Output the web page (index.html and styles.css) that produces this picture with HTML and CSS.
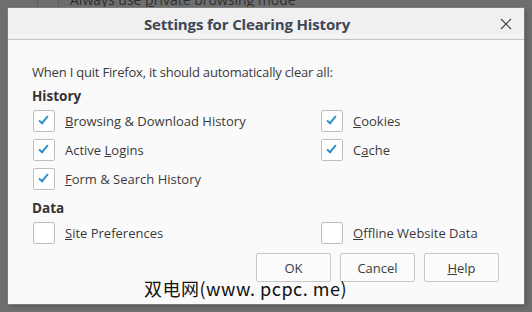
FILE: index.html
```html
<!DOCTYPE html>
<html lang="en">
<head>
  <meta charset="UTF-8">
  <title>Settings for Clearing History</title>
  <link rel="stylesheet" href="styles.css">
</head>
<body>
  <div class="backdrop">
    <div class="backdrop-row">
      <span class="backdrop-line"></span>
      <span class="backdrop-line second"></span>
      <span class="backdrop-text">Always use <u>p</u>rivate browsing mode</span>
    </div>
  </div>

  <div class="dialog">
    <div class="titlebar">
      <span class="title">Settings for Clearing History</span>
      <button class="close" aria-label="Close">
        <svg width="12" height="12" viewBox="0 0 12 12"><path d="M1 1 L11 11 M11 1 L1 11" stroke="#444" stroke-width="1.2" fill="none"/></svg>
      </button>
    </div>

    <div class="content">
      <div class="intro">When I quit Firefox, it should automatically clear all:</div>

      <div class="group-title">History</div>
      <div class="options">
        <label class="option"><span class="box checked"></span><span><u>B</u>rowsing &amp; Download History</span></label>
        <label class="option"><span class="box checked"></span><span><u>C</u>ookies</span></label>
        <label class="option"><span class="box checked"></span><span>Active <u>L</u>ogins</span></label>
        <label class="option"><span class="box checked"></span><span>C<u>a</u>che</span></label>
        <label class="option"><span class="box checked"></span><span><u>F</u>orm &amp; Search History</span></label>
      </div>

      <div class="group-title data">Data</div>
      <div class="options">
        <label class="option"><span class="box"></span><span><u>S</u>ite Preferences</span></label>
        <label class="option"><span class="box"></span><span><u>O</u>ffline Website Data</span></label>
      </div>

      <div class="buttons">
        <button class="btn">OK</button>
        <button class="btn">Cancel</button>
        <button class="btn"><u>H</u>elp</button>
      </div>
    </div>
  </div>

  <div class="watermark">双电网(www. pcpc. me)</div>
</body>
</html>
```

FILE: styles.css
```css
*, *::before, *::after {
  box-sizing: border-box;
}

body {
  margin: 0;
  width: 532px;
  height: 312px;
  overflow: hidden;
  background-color: #6e6e6e;
  font-family: 'Open Sans', 'Liberation Sans', sans-serif;
  position: relative;
}

.backdrop-row {
  height: 20px;
  margin-top: -11px;
  display: flex;
  align-items: center;
}

.backdrop-line {
  width: 1px;
  height: 20px;
  background-color: #5a5a5a;
  margin-left: 37px;
}

.backdrop-line.second {
  margin-left: 20px;
}

.backdrop-text {
  margin-left: 11px;
  font-size: 14px;
  color: #2e2e2e;
}

.dialog {
  position: absolute;
  left: 8px;
  top: 8px;
  width: 516px;
  height: 296px;
  background-color: #fafafa;
  box-shadow: 0 0 0 1px #7c7c7c, 2px 2px 4px rgba(0,0,0,0.25);
}

.titlebar {
  height: 32px;
  padding-right: 38px;
  background: linear-gradient(#f0f0f0 0, #f0f0f0 24px, #f6f6f6 28px, #f0f0f0 31px);
  border-bottom: 1px solid #c4c4c4;
  display: flex;
  align-items: center;
  justify-content: center;
  position: relative;
}

.title {
  font-size: 15px;
  font-weight: 700;
  color: #3d4756;
  letter-spacing: -0.15px;
}

.close {
  position: absolute;
  right: 12px;
  top: 10px;
  width: 12px;
  height: 12px;
  padding: 0;
  border: none;
  background: transparent;
  display: flex;
}

.content {
  padding: 22px 25px 0 24px;
  color: #3a3a3a;
  font-size: 13px;
}

.intro {
  line-height: 20px;
  letter-spacing: -0.2px;
}

.group-title {
  margin-top: 4px;
  line-height: 20px;
  font-weight: 700;
  font-size: 13.5px;
  color: #333;
}

.group-title.data {
  margin-top: 5px;
}

.options {
  display: grid;
  grid-template-columns: 288px 1fr;
}

.option {
  height: 29px;
  display: flex;
  align-items: center;
  gap: 10px;
  padding-left: 1px;
}

.box {
  width: 22px;
  height: 22px;
  border: 1px solid #bdbdbd;
  border-radius: 2px;
  background-color: #fff;
  flex-shrink: 0;
  position: relative;
}

.box.checked::after {
  content: "";
  position: absolute;
  left: 7px;
  top: 3px;
  width: 5px;
  height: 10px;
  border-right: 2.5px solid #2e8fc8;
  border-bottom: 2.5px solid #2e8fc8;
  transform: rotate(40deg);
}

.buttons {
  margin-top: 6px;
  display: flex;
  justify-content: flex-end;
  gap: 9px;
}

.btn {
  width: 75px;
  height: 29px;
  border: 1px solid #c8c8c8;
  border-radius: 2px;
  background-color: #fbfbfb;
  font-family: inherit;
  font-size: 13px;
  color: #3a3a3a;
  padding: 0;
}

.watermark {
  position: absolute;
  left: 144px;
  top: 275px;
  font-family: 'Noto Sans CJK SC', 'DejaVu Sans Mono', sans-serif;
  font-size: 18px;
  color: #111;
  letter-spacing: 0.5px;
}
```
